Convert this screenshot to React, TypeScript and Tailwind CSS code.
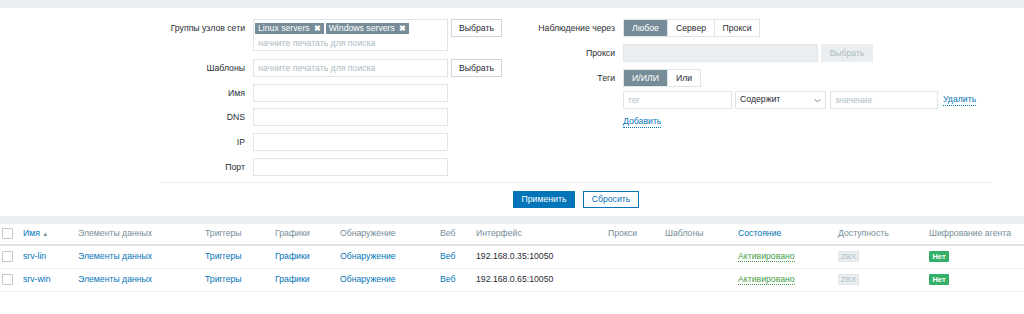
import React from "react";

const font = { fontFamily: '"Liberation Sans", Arial, sans-serif' };

const cols =
  "grid grid-cols-[23px_55px_127px_70px_65px_100px_36px_132px_57px_73px_100px_91px_95px] items-center";

const hosts = [
  { name: "srv-lin", ip: "192.168.0.35:10050" },
  { name: "srv-win", ip: "192.168.0.65:10050" },
];

const Label = ({ children, w }: { children: React.ReactNode; w: string }) => (
  <div className={`${w} shrink-0 pr-[8px] text-right leading-[18px] text-[#1f2c33]`}>{children}</div>
);

const Input = ({ w, placeholder }: { w: string; placeholder?: string }) => (
  <div className={`${w} h-[18px] border border-[#dfe4e7] bg-white px-[4px] leading-[16px] text-[#acbbc2]`}>
    {placeholder}
  </div>
);

const SelectBtn = ({ disabled }: { disabled?: boolean }) => (
  <div
    className={
      disabled
        ? "ml-[3px] h-[18px] w-[52px] border border-[#ebeef0] bg-[#ebeef0] text-center leading-[16px] text-[#acbbc2]"
        : "ml-[3px] h-[18px] w-[51px] border border-[#cfd6da] bg-white text-center leading-[16px] text-[#1f2c33]"
    }
  >
    Выбрать
  </div>
);

const Chip = ({ text }: { text: string }) => (
  <span className="mr-[2px] inline-flex h-[11px] items-center gap-[4px] bg-[#768d99] px-[3px] leading-[11px] text-white">
    {text}
    <span className="text-[8px] font-bold">✖</span>
  </span>
);

const Radio = ({ items }: { items: [string, number][] }) => (
  <div className="flex h-[18px] border border-[#dfe4e7]">
    {items.map(([t, w], i) => (
      <div
        key={t}
        style={{ width: w }}
        className={
          i === 0
            ? "bg-[#768d99] text-center leading-[16px] text-white"
            : "border-l border-[#dfe4e7] bg-white text-center leading-[16px] text-[#1f2c33]"
        }
      >
        {t}
      </div>
    ))}
  </div>
);

export default function App() {
  return (
    <div style={font} className="min-h-[314px] bg-white text-[8.7px] text-[#1f2c33]">
      <div className="h-[8px] bg-[#ebeef0]" />
      <div className="bg-white">
        <div className="ml-[160px] w-[832px] border-b border-[#ebeef0] pb-[6px] pt-[11px]">
          <div className="flex">
            {/* left column */}
            <div className="flex w-[350px] flex-col gap-[6.67px]">
              <div className="mb-[1.3px] flex">
                <Label w="w-[93px]">Группы узлов сети</Label>
                <div className="h-[32px] w-[195px] border border-[#dfe4e7] pl-[1px] pt-[3px]">
                  <div className="flex">
                    <Chip text="Linux servers" />
                    <Chip text="Windows servers" />
                  </div>
                  <div className="pl-[3px] pt-[3px] leading-[12px] text-[#acbbc2]">начните печатать для поиска</div>
                </div>
                <SelectBtn />
              </div>
              <div className="flex">
                <Label w="w-[93px]">Шаблоны</Label>
                <Input w="w-[195px]" placeholder="начните печатать для поиска" />
                <SelectBtn />
              </div>
              {["Имя", "DNS", "IP", "Порт"].map((l) => (
                <div key={l} className="flex">
                  <Label w="w-[93px]">{l}</Label>
                  <Input w="w-[195px]" />
                </div>
              ))}
            </div>
            {/* right column */}
            <div className="flex flex-col">
              <div className="flex">
                <Label w="w-[113px]">Наблюдение через</Label>
                <Radio items={[["Любое", 43], ["Сервер", 47], ["Прокси", 45]]} />
              </div>
              <div className="mt-[7px] flex">
                <Label w="w-[113px]">Прокси</Label>
                <div className="h-[18px] w-[195px] border border-[#e3e6e8] bg-[#ebeef0]" />
                <SelectBtn disabled />
              </div>
              <div className="mt-[7px] flex">
                <Label w="w-[113px]">Теги</Label>
                <Radio items={[["И/ИЛИ", 43], ["Или", 33]]} />
              </div>
              <div className="ml-[113px] mt-[4px] flex items-center">
                <Input w="w-[109px]" placeholder="тег" />
                <div className="ml-[3px] flex h-[18px] w-[91px] items-center justify-between border border-[#dfe4e7] px-[4px] text-[#1f2c33]">
                  <span>Содержит</span>
                  <svg width="7" height="5" viewBox="0 0 7 5">
                    <path d="M0.5 1 L3.5 4 L6.5 1" fill="none" stroke="#768d99" strokeWidth="1" />
                  </svg>
                </div>
                <div className="ml-[4px]">
                  <Input w="w-[108px]" placeholder="значение" />
                </div>
                <span className="ml-[5px] border-b border-dotted border-[#0275b8] leading-[11px] text-[#0275b8]">
                  Удалить
                </span>
              </div>
              <div className="ml-[113px] mt-[7px] flex">
                <span className="border-b border-dotted border-[#0275b8] leading-[11px] text-[#0275b8]">Добавить</span>
              </div>
            </div>
          </div>
        </div>
        <div className="ml-[160px] flex w-[832px] justify-center gap-[8px] pb-[8px] pt-[8px]">
          <div className="h-[17px] w-[62px] border border-[#0275b8] bg-[#0275b8] text-center leading-[15px] text-white">
            Применить
          </div>
          <div className="h-[17px] w-[56px] border border-[#0275b8] bg-white text-center leading-[15px] text-[#0275b8]">
            Сбросить
          </div>
        </div>
      </div>
      <div className="h-[8px] bg-[#ebeef0]" />
      {/* table */}
      <div className={`${cols} h-[22px] border-b-2 border-[#dfe4e7] text-[#768d99]`}>
        <div className="pl-[2px]">
          <div className="h-[11px] w-[11px] rounded-[1px] border border-[#bfc9ce] bg-white" />
        </div>
        <div className="text-[#0275b8]">
          Имя <span className="text-[6px] text-[#768d99]">▲</span>
        </div>
        <div>Элементы данных</div>
        <div>Триггеры</div>
        <div>Графики</div>
        <div>Обнаружение</div>
        <div>Веб</div>
        <div>Интерфейс</div>
        <div>Прокси</div>
        <div>Шаблоны</div>
        <div className="text-[#0275b8]">Состояние</div>
        <div>Доступность</div>
        <div>Шифрование агента</div>
      </div>
      {hosts.map((h) => (
        <div key={h.name} className={`${cols} h-[23px] border-b border-[#ebeef0]`}>
          <div className="pl-[2px]">
            <div className="h-[11px] w-[11px] rounded-[1px] border border-[#bfc9ce] bg-white" />
          </div>
          <div className="text-[#0275b8]">{h.name}</div>
          <div className="text-[#0275b8]">Элементы данных</div>
          <div className="text-[#0275b8]">Триггеры</div>
          <div className="text-[#0275b8]">Графики</div>
          <div className="text-[#0275b8]">Обнаружение</div>
          <div className="text-[#0275b8]">Веб</div>
          <div>{h.ip}</div>
          <div />
          <div />
          <div>
            <span className="border-b border-dotted border-[#429e47] text-[#429e47]">Активировано</span>
          </div>
          <div>
            <span className="inline-block h-[11px] w-[21px] rounded-[1px] border border-[#dfe4e7] bg-[#ebeef0] text-center text-[8px] leading-[9px] text-[#acbbc2]">
              ZBX
            </span>
          </div>
          <div>
            <span className="inline-block h-[11px] w-[20px] rounded-[1px] bg-[#34af67] text-center text-[7.5px] font-bold leading-[11px] text-white">
              Нет
            </span>
          </div>
        </div>
      ))}
    </div>
  );
}
